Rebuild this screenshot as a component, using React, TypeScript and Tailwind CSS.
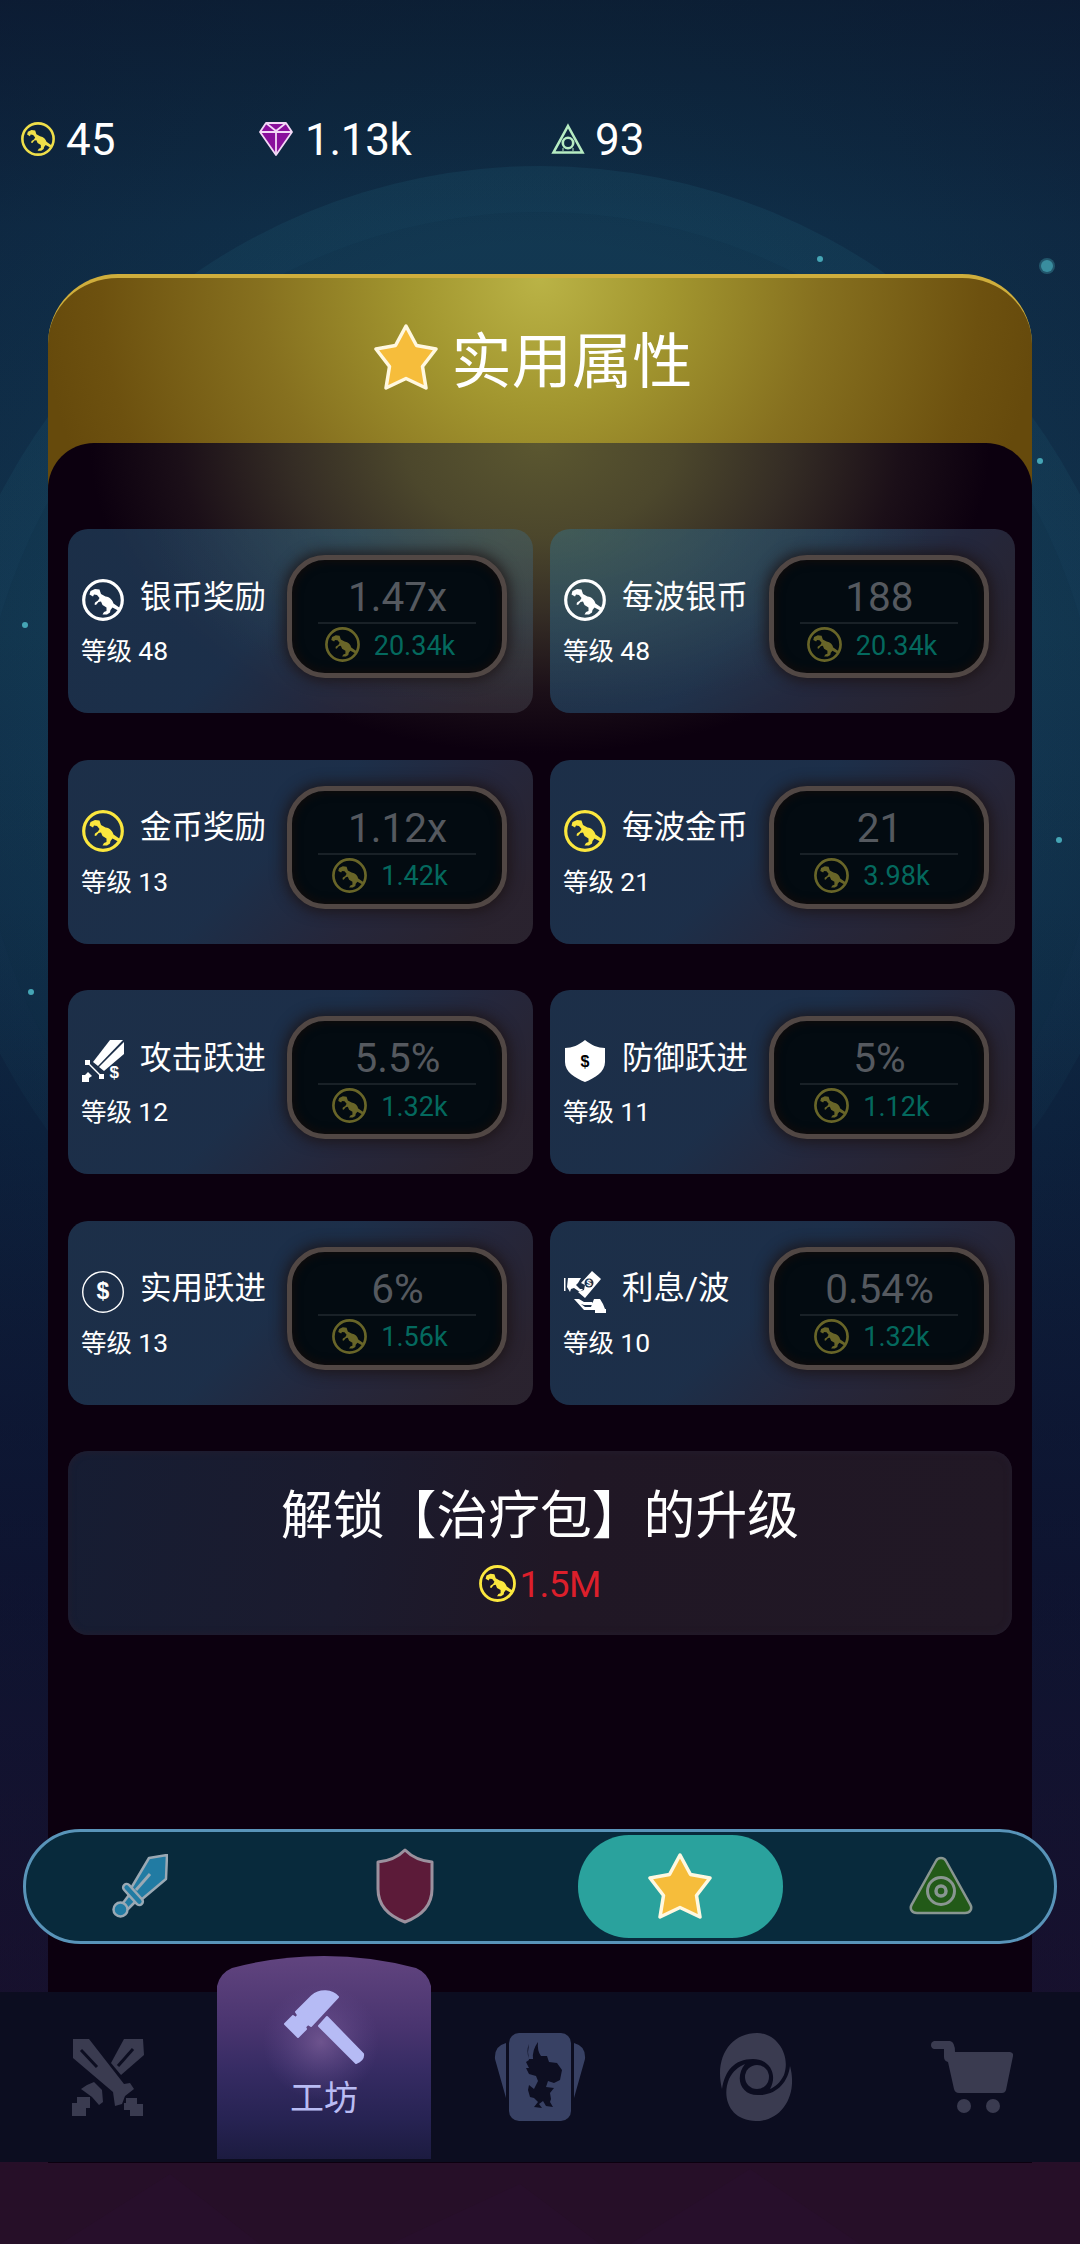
import type { ReactNode } from "react";

interface Upgrade {
  name: string;
  level: number;
  value: string;
  cost: string;
  icon: ReactNode;
  // light spilling from the header onto the top row
  glow?: "left" | "right";
}

function CoinIcon({ className }: { className: string }) {
  return (
    <svg viewBox="0 0 42 42" className={className} fill="currentColor">
      <circle cx="21" cy="21" r="19.3" fill="none" stroke="currentColor" strokeWidth="3.2" />
      <path d="M7.5 15.5 8.5 12 13 10l4.500.5L19 15l4.500 2.500C28 18 30.500 21 31.500 24.500L38 29l-1 3-6.500-3.500L28.500 31 28 33.500 25 35.500h-4.500L22 33l2.500-1L24.500 28.500 20.500 26 19 22.500 16.500 23 14 26 12.500 25.500 13 23.500 16 21.500 17.500 19 15 16 12 15.500 11 17.500Z" />
    </svg>
  );
}

function GemIcon() {
  return (
    <svg viewBox="0 0 34 34" className="size-[34px]" fill="#8a0f9c" stroke="#f3d8f6" strokeWidth="1.8" strokeLinejoin="round">
      <path d="M7 1h20l6 9-16 23L1 10Z" />
      <path d="M1 10h32M7 1l10 8L27 1M17 10v22" fill="none" />
    </svg>
  );
}

function TriangleIcon() {
  return (
    <svg viewBox="0 0 34 32" className="h-[32px] w-[34px]" fill="none" stroke="#b6ecc2" strokeWidth="2.6">
      <path d="M17 3 31.500 29.500H2.500Z" />
      <circle cx="17" cy="20" r="5.2" />
      <path d="M12 28v-3M22 28v-3" strokeWidth="1" />
    </svg>
  );
}

function StarIcon({ className }: { className: string }) {
  return (
    <svg viewBox="0 0 64 68" className={className}>
      <path
        d="M32 3 42.500 22.500 62 26 48.500 43.500 52 65 32 55.500 12 65 15.500 43.500 2 26 21.500 22.500Z"
        fill="#f6bd3b"
        stroke="#fff8e0"
        strokeWidth="3.5"
        strokeLinejoin="round"
      />
    </svg>
  );
}

function SwordCashIcon() {
  return (
    <svg viewBox="0 0 42 42" className="size-[42px]" fill="#fff">
      <path d="M28 0h13L16 26l-5-4Z" />
      <path d="M42 2v12L22 31l-5-4Z" />
      <path d="M3 20h5v4l10 10h4v5h-5v-4L7 25H3Z" />
      <path d="M6 32l4 4-3 2v4H0v-7h3Z" />
      <text x="27.500" y="38" fontSize="17" fontWeight="700" fontFamily="Liberation Sans, sans-serif">$</text>
    </svg>
  );
}

function ShieldCashIcon() {
  return (
    <svg viewBox="0 0 42 42" className="size-[42px]">
      <path d="M21 0c6 5 13 8 20 8v14c0 10-10 16-20 20C11 38 1 32 1 22V8c7 0 14-3 20-8Z" fill="#fff" />
      <text x="21" y="27" textAnchor="middle" fontSize="16" fontWeight="700" fontFamily="Liberation Sans, sans-serif">$</text>
    </svg>
  );
}

function CashIcon() {
  return (
    <svg viewBox="0 0 42 42" className="size-[42px]">
      <circle cx="21" cy="21" r="20.3" fill="none" stroke="#fff" strokeWidth="1.4" />
      <text x="21" y="28" textAnchor="middle" fontSize="23" fontWeight="700" fill="#fff" fontFamily="Liberation Sans, sans-serif">$</text>
    </svg>
  );
}

function InterestIcon() {
  return (
    <svg viewBox="0 0 42 42" className="size-[42px]" fill="#fff">
      <path d="M0 7h1.500v13H0ZM4 7h13l-3 5-2 2 4 4 3 0-3 3-6-4-3 1-1 3-3-5Z" />
      <path d="M28 0l9 8-16 19-7-6 6-2 1-5-4-2Z" />
      <circle cx="25" cy="12" r="4.5" fill="#1d2f47" />
      <text x="25" y="15" textAnchor="middle" fontSize="9" fontWeight="700" fontFamily="Liberation Sans, sans-serif">$</text>
      <path d="M10 28h5l5 3h8q2 3-1 3h-7l-3-1 4 3h6l3-8h6l3 5 2 5h1v4H31v-3H20Z" />
    </svg>
  );
}

const white = <CoinIcon className="size-[42px] text-white" />;
const gold = <CoinIcon className="size-[42px] text-[#fbe73e]" />;

const upgrades: Upgrade[] = [
  { name: "银币奖励", level: 48, value: "1.47x", cost: "20.34k", icon: white, glow: "left" },
  { name: "每波银币", level: 48, value: "188", cost: "20.34k", icon: white, glow: "right" },
  { name: "金币奖励", level: 13, value: "1.12x", cost: "1.42k", icon: gold },
  { name: "每波金币", level: 21, value: "21", cost: "3.98k", icon: gold },
  { name: "攻击跃进", level: 12, value: "5.5%", cost: "1.32k", icon: <SwordCashIcon /> },
  { name: "防御跃进", level: 11, value: "5%", cost: "1.12k", icon: <ShieldCashIcon /> },
  { name: "实用跃进", level: 13, value: "6%", cost: "1.56k", icon: <CashIcon /> },
  { name: "利息/波", level: 10, value: "0.54%", cost: "1.32k", icon: <InterestIcon /> },
];

const cardBg = {
  none: "bg-[linear-gradient(135deg,rgba(39,78,110,0.6)_0%,rgba(39,78,112,0.6)_45%,rgba(54,64,88,0.6)_68%,rgba(60,56,66,0.62)_90%)]",
  left: "bg-[radial-gradient(ellipse_380px_180px_at_100%_0%,rgba(82,112,92,0.42)_0%,rgba(60,100,105,0.25)_50%,transparent_100%),linear-gradient(135deg,rgba(39,78,110,0.6)_0%,rgba(39,78,112,0.6)_45%,rgba(54,64,88,0.6)_68%,rgba(60,56,66,0.62)_90%)]",
  right: "bg-[radial-gradient(ellipse_380px_180px_at_0%_0%,rgba(82,112,92,0.42)_0%,rgba(60,100,105,0.25)_50%,transparent_100%),linear-gradient(135deg,rgba(39,78,110,0.6)_0%,rgba(39,78,112,0.6)_45%,rgba(54,64,88,0.6)_68%,rgba(60,56,66,0.62)_90%)]",
};

function UpgradeCard({ name, level, value, cost, icon, glow }: Upgrade) {
  return (
    <div className={`flex h-[184px] w-[465px] rounded-[20px] pl-[13px] ${cardBg[glow ?? "none"]}`}>
      <div className="w-[206px] shrink-0 pt-[50px]">
        <div className="flex h-[42px] items-center gap-[16px]">
          <span className="ml-px shrink-0">{icon}</span>
          <span className="-mt-[5px] text-[31.5px] whitespace-nowrap text-white">{name}</span>
        </div>
        <div className="mt-[11px] text-[25.5px] leading-[38px] text-white">
          等级 <span className="text-[26.5px]">{level}</span>
        </div>
      </div>
      <div className="mt-[26px] flex h-[123px] w-[220px] flex-col items-center rounded-[38px] border-[5px] border-[#514744] bg-[#030b11] pt-[11px] shadow-[0_0_14px_3px_rgba(28,18,18,0.8),inset_0_0_8px_2px_#120c0b]">
        <div className="pl-px text-[40.5px] leading-[52px] text-[#55595f]">{value}</div>
        <div className="-mt-px h-[2px] w-[158px] bg-[#192127]" />
        <div className="mt-[3px] flex h-[35px] items-center gap-[14px] pr-[14px]">
          <CoinIcon className="size-[35px] text-[#686528]" />
          <span className="pt-[2px] text-[27px] leading-[34px] text-[#04695e]">{cost}</span>
        </div>
      </div>
    </div>
  );
}

function Background() {
  return (
    <svg viewBox="0 0 1080 2244" className="absolute inset-0 h-[2244px] w-[1080px]">
      <defs>
        <linearGradient id="sky" x1="0" y1="0" x2="0" y2="1">
          <stop offset="0" stopColor="#0d2338" />
          <stop offset="0.1" stopColor="#10304a" />
          <stop offset="0.28" stopColor="#12344f" />
          <stop offset="0.5" stopColor="#0e2642" />
          <stop offset="0.7" stopColor="#101733" />
          <stop offset="0.86" stopColor="#1d1230" />
          <stop offset="1" stopColor="#260f28" />
        </linearGradient>
        <radialGradient id="edge" cx="540" cy="700" r="1000" gradientUnits="userSpaceOnUse">
          <stop offset="0.45" stopColor="#061024" stopOpacity="0" />
          <stop offset="0.9" stopColor="#0b102c" stopOpacity="0.4" />
        </radialGradient>
        <linearGradient id="haze" x1="0" y1="0" x2="0" y2="1">
          <stop offset="0" stopColor="#1a4f68" stopOpacity="0.35" />
          <stop offset="0.6" stopColor="#1a4f68" stopOpacity="0.25" />
          <stop offset="1" stopColor="#1a4f68" stopOpacity="0" />
        </linearGradient>
      </defs>
      <rect width="1080" height="2244" fill="url(#sky)" />
      <circle cx="540" cy="774" r="608" fill="url(#haze)" />
      <circle cx="540" cy="774" r="562" fill="#0f3049" fillOpacity="0.25" />
      <rect width="1080" height="2162" fill="url(#edge)" />
      <path d="M0 2162h1080v82H0Z" fill="#260f28" />
      <path d="M60 2244l110-70 90 70ZM390 2244l130-60 80 60ZM630 2244l120-75 110 75Z" fill="#2a1030" fillOpacity="0.4" />
      <g fill="#45a5b5">
        <circle cx="1047" cy="266" r="8" fillOpacity="0.35" />
        <circle cx="1047" cy="266" r="6" fillOpacity="0.7" />
        <circle cx="820" cy="259" r="3" />
        <circle cx="1040" cy="461" r="3" />
        <circle cx="25" cy="625" r="3" />
        <circle cx="1059" cy="840" r="3" />
        <circle cx="31" cy="992" r="3" />
      </g>
    </svg>
  );
}

function Resources() {
  return (
    <header className="flex h-[52px] items-center pl-[21px] text-[44px] leading-[52px] text-white">
      <div className="flex w-[238px] items-center gap-[11px]">
        <CoinIcon className="size-[34px] text-[#efdf4a]" />
        <span className="pt-px">45</span>
      </div>
      <div className="flex w-[292px] items-center gap-[12px]">
        <GemIcon />
        <span className="pt-px tracking-[-0.3px]">1.13k</span>
      </div>
      <div className="flex items-center gap-[10px]">
        <TriangleIcon />
        <span className="pt-px">93</span>
      </div>
    </header>
  );
}

function CategoryTabs() {
  return (
    <div className="-mx-[25px] flex h-[115px] items-center rounded-full border-[3px] border-[#5994b9] bg-[#082a3c]">
      <div className="flex w-[228px] justify-center">
        <svg viewBox="0 0 56 64" className="h-[64px] w-[56px]" fill="#217ba3" stroke="#9aa9b4" strokeWidth="2.5" strokeLinejoin="round">
          <path d="M37 4 55 1l-1 24-25 21-11-10Z" />
          <path d="M38 20 24 36" fill="none" strokeWidth="3" />
          <path d="M17 41 11 49l5 6 8-8Z" />
          <rect x="8" y="37" width="26" height="7" rx="3.5" transform="rotate(48 21 40.500)" />
          <circle cx="8.5" cy="55.5" r="7" />
        </svg>
      </div>
      <div className="flex w-[302px] justify-center">
        <svg viewBox="0 0 58 76" className="h-[76px] w-[58px]">
          <path d="M29 2c7 7 16 11 27 12v27C56 57 45 68 29 74 13 68 2 57 2 41V14C13 13 22 9 29 2Z" fill="#5c1b39" stroke="#9b919e" strokeWidth="3" strokeLinejoin="round" />
        </svg>
      </div>
      <div className="ml-[22px] flex h-[103px] w-[205px] items-center justify-center rounded-[51px] bg-[#2aa29d] pr-px">
        <StarIcon className="h-[68px] w-[64px]" />
      </div>
      <div className="ml-[126px]">
        <svg viewBox="0 0 64 60" className="h-[60px] w-[64px]" fill="#225a18" stroke="#899691" strokeWidth="2.5">
          <path d="M27 5c2-4 8-4 10 0l24 43c3 5 0 9-5 9H8c-5 0-8-4-5-9Z" />
          <circle cx="32" cy="35" r="13.5" strokeWidth="3" />
          <circle cx="32" cy="35" r="5" strokeWidth="3.5" />
        </svg>
      </div>
    </div>
  );
}

function SwordsIcon() {
  return (
    <svg viewBox="0 0 72 78" className="h-[78px] w-[72px]" fill="#3a3b50">
      <path d="M52 1h19l1 16-23 20-10-12Z" />
      <path d="M61 11 46 28" stroke="#0c0d20" strokeWidth="3" />
      <path d="M1 1h16l35 45 6-1 4 6-9 7-3 8-7 2-2-14L1 20Z" />
      <path d="M9 12 25 29" stroke="#0c0d20" strokeWidth="3" />
      <path d="M22 44l8 8 1 12-4 3-7-8-11-8 6-4ZM5 59h13v11h-4v8H0V65h5ZM54 60h11v6h6v12H58v-6h-6v-7h2Z" />
    </svg>
  );
}

function HammerIcon() {
  return (
    <svg viewBox="0 0 82 74" className="h-[74px] w-[82px]" fill="#b6bbf5" stroke="#b6bbf5" strokeWidth="2" strokeLinejoin="round">
      <path d="M13 22 29 6c8-7 20-6 26 1L28 36l-3-2-3 3 1 2-8 8L2 34l8-8 3 2 2-3Z" />
      <path d="M44 27 80 64q1 6-7 9L36 36Z" />
    </svg>
  );
}

function CardsIcon() {
  return (
    <svg viewBox="0 0 92 88" className="h-[88px] w-[92px]" fill="#384164">
      <path d="M12 10v55L1 26Q0 13 12 10ZM80 10v55l11-39Q92 13 80 10Z" />
      <rect x="15" width="62" height="88" rx="10" />
      <path
        d="M35 11q-3 7 0 15l4 0q-1-9 5-17-1 9 3 14l6 0 2 6 8 1 5 7-2 10-6 3-6-2-2 6 8 1-4 5 1 6-1 3 3 5-7-1-3-5-4 3 3 4-8-1 4-5-4-4-4-1-2-7 1-5 5 4 4-8-2-5-7-2-3-6 3 0-3-6 3-2-1-8Z"
        fill="#0d0e21"
      />
    </svg>
  );
}

function VortexIcon() {
  return (
    <svg viewBox="0 0 74 88" className="h-[88px] w-[74px]" fill="#3a3b50">
      <path d="M3 56C-5 24 12 0 38 0c20 0 34 22 27 42-4 8-9 12-14 14 8-14 0-30-17-30C15 26 6 38 3 56Z" />
      <path d="M71 33c8 29-8 55-34 55C12 88 2 66 10 46c4-8 9-12 16-15-11 14-4 32 14 31 18 0 29-13 31-29Z" />
      <circle cx="38" cy="44" r="12" />
    </svg>
  );
}

function CartIcon() {
  return (
    <svg viewBox="0 0 82 72" className="h-[72px] w-[82px]" fill="#3a3b50">
      <path d="M3 0h16q5 1 5 11h55q4 1 3 4l-7 34q-1 3-4 3H28q-4 0-5-4L17 21q-4-1-4-5V8H3q-3-1-3-4t3-4Z" />
      <circle cx="33" cy="65" r="7" />
      <circle cx="62" cy="65" r="7" />
    </svg>
  );
}

function BottomNav() {
  return (
    <nav className="relative flex h-[170px] items-center bg-[#0c0d20]">
      <div className="flex w-[217px] justify-center pr-px">
        <SwordsIcon />
      </div>
      <div className="-mt-[39px] h-[203px] w-[214px] shrink-0">
        <svg viewBox="0 0 214 203" className="absolute h-[203px] w-[214px]">
          <defs>
            <linearGradient id="tab" x1="0" y1="0" x2="0" y2="1">
              <stop offset="0" stopColor="#61447f" />
              <stop offset="0.35" stopColor="#49346f" />
              <stop offset="0.55" stopColor="#372c64" />
              <stop offset="0.8" stopColor="#272353" />
              <stop offset="1" stopColor="#1c1b40" />
            </linearGradient>
            <radialGradient id="shine">
              <stop offset="0" stopColor="#8a6aa5" stopOpacity="0.6" />
              <stop offset="1" stopColor="#6a5095" stopOpacity="0" />
            </radialGradient>
          </defs>
          <path d="M0 203V30Q3 17 15 12 60 0 107 0t92 12q12 5 15 18v173Z" fill="url(#tab)" />
          <circle cx="104" cy="86" r="58" fill="url(#shine)" />
        </svg>
        <div className="relative flex flex-col items-center pt-[34px]">
          <HammerIcon />
          <span className="mt-[13px] text-[34px] leading-[42px] text-[#b9bcf3]">工坊</span>
        </div>
      </div>
      <div className="ml-[63px] flex w-[92px] justify-center">
        <CardsIcon />
      </div>
      <div className="ml-[133px]">
        <VortexIcon />
      </div>
      <div className="ml-[138px]">
        <CartIcon />
      </div>
    </nav>
  );
}

export default function App() {
  return (
    <div className="relative h-[2244px] w-[1080px] overflow-hidden bg-[#0c2036] font-[Roboto,'Noto_Sans_CJK_SC',sans-serif]">
      <Background />
      <div className="relative flex flex-col pt-[113px]">
        <Resources />

        <main className="mx-[48px] mt-[109px] h-[1718px] rounded-t-[70px] border-t-[4px] border-[#cfae3c] bg-[radial-gradient(circle_at_492px_0px,#bab346_0px,#a2962f_130px,#86701f_280px,#6d510f_440px,#664a0c_500px)]">
          <div className="flex h-[165px] items-center justify-center gap-[14px] pr-[14px]">
            <StarIcon className="-mt-[8px] h-[68px] w-[64px]" />
            <h1 className="pt-[4px] text-[60.2px] leading-[70px] text-white">实用属性</h1>
          </div>

          <div className="h-[1549px] rounded-t-[46px] bg-[#0c000f] bg-[radial-gradient(ellipse_450px_310px_at_50%_0%,#5b5730_0%,#4c472c_30%,#352d25_55%,#1b0f18_80%,#0c000f_100%)] bg-no-repeat pt-[86px]">
            <div className="mx-[20px] grid grid-cols-[465px_465px] gap-x-[17px] gap-y-[46.5px]">
              {upgrades.map((u) => (
                <UpgradeCard key={u.name} {...u} />
              ))}
            </div>

            <div className="mt-[46px] ml-[20px] flex h-[184px] w-[944px] flex-col items-center rounded-[20px] bg-[linear-gradient(100deg,#161d33_0%,#1b1b2e_30%,#201725_52%,#211825_100%)] pt-[30px] shadow-[inset_0_0_7px_#241d2e]">
              <div className="text-[51.8px] leading-[72px] whitespace-nowrap text-white">解锁【治疗包】的升级</div>
              <div className="mt-[8px] flex items-center gap-[3px] text-[37px] leading-[44px] text-[#dc1f2b]">
                <CoinIcon className="size-[37px] text-[#fbe73e]" />
                <span className="pt-[2px] tracking-[-0.6px]">1.5M</span>
              </div>
            </div>

            <div className="mt-[194px]">
              <CategoryTabs />
            </div>
          </div>
        </main>

        <BottomNav />
        <div className="mx-[48px] h-px bg-[#0c000f]" />
      </div>
    </div>
  );
}
